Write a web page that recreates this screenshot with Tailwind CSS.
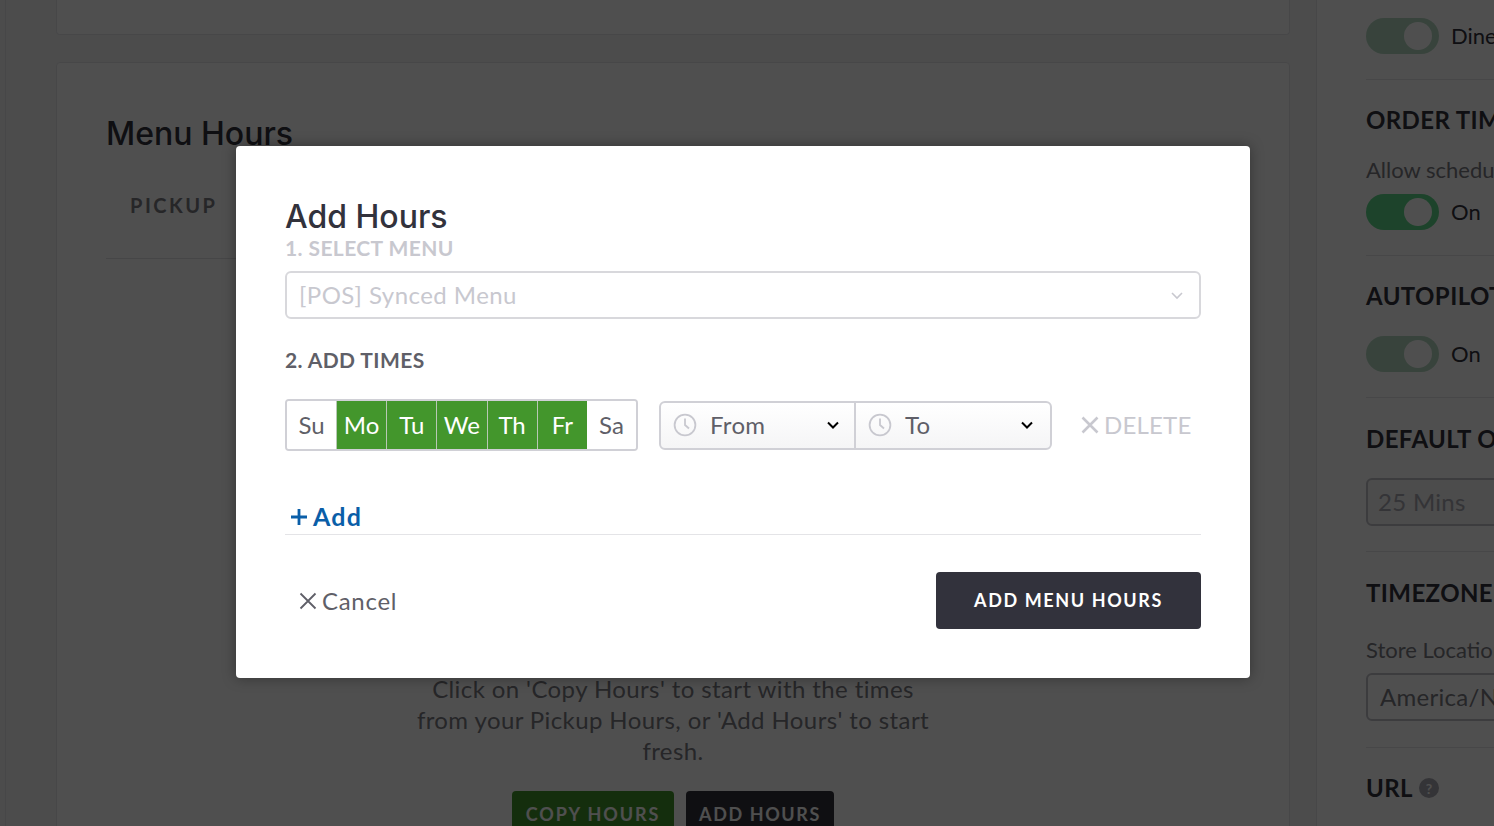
<!DOCTYPE html>
<html lang="en">
<head>
  <meta charset="UTF-8">
  <title>Add Hours</title>
  <script src="https://cdn.jsdelivr.net/npm/@tailwindcss/browser@4"></script>
</head>
<body class="font-['Lato','Liberation_Sans',sans-serif]">
  <div class="relative flex h-[826px] w-[1494px] overflow-hidden bg-[#f5f5f6]">

    <!-- page behind the modal -->
    <main class="ml-[5px] w-[1311px] shrink-0 border-l border-[#e6e6e9] pl-[50px] pr-[26px]">
      <div class="h-[35px] rounded-b border border-t-0 border-[#e6e6e9] bg-white"></div>
      <section class="mt-[27px] h-[900px] rounded border border-[#e6e6e9] bg-white px-[49px] pt-[49px]">
        <h2 class="h-[44px] font-['Inter',sans-serif] text-[32px] leading-[44px] font-medium text-[#32323c]">Menu Hours</h2>
        <div class="mt-[2px] h-[101px] border-b border-[#e0e0e4] pl-[24px] pt-[32px]">
          <span class="text-[20px] font-bold tracking-[2.5px] text-[#7a7a82]">PICKUP</span>
        </div>
        <div class="mt-[414px] flex flex-col items-center">
          <p class="w-[540px] text-center text-[24px] leading-[31px] tracking-[0.4px] text-[#7a7a82]">Click on 'Copy Hours' to start with the times<br>from your Pickup Hours, or 'Add Hours' to start<br>fresh.</p>
          <div class="mt-[25px] flex gap-3">
            <button class="h-[46px] w-[162px] rounded-sm bg-[#43962c] text-[18px] font-bold tracking-[1.900px] text-white">COPY HOURS</button>
            <button class="h-[46px] w-[148px] rounded-sm bg-[#32323c] text-[18px] font-bold tracking-[1.600px] text-white">ADD HOURS</button>
          </div>
        </div>
      </section>
    </main>

    <!-- settings side panel -->
    <aside class="w-[178px] shrink-0 overflow-hidden border-l border-[#e6e6e9] bg-white pl-[49px] whitespace-nowrap text-[#32323c]">
      <div class="flex h-[80px] w-[300px] items-start gap-3 border-b border-[#e6e6e9] pt-[18px]">
        <span class="flex h-[36px] w-[73px] items-center justify-end rounded-full bg-[#b5d8c2] pr-[7px]"><span class="h-[28px] w-[28px] rounded-full bg-white"></span></span>
        <span class="text-[22px] leading-[36px]">Dine In</span>
      </div>
      <div class="h-[176px] w-[300px] border-b border-[#e6e6e9] pt-[24px]">
        <h3 class="text-[24px] leading-[32px] font-bold tracking-[0.4px]">ORDER TIMES</h3>
        <p class="mt-[19px] text-[22px] leading-[30px] text-[#7a7a82]">Allow scheduled orders</p>
        <div class="mt-[9px] flex items-center gap-3">
          <span class="flex h-[36px] w-[73px] items-center justify-end rounded-full bg-[#5fd78a] pr-[7px]"><span class="h-[28px] w-[28px] rounded-full bg-white"></span></span>
          <span class="pb-[2px] text-[22px]">On</span>
        </div>
      </div>
      <div class="h-[142px] w-[300px] border-b border-[#e6e6e9] pt-[24px]">
        <h3 class="text-[24px] leading-[32px] font-bold tracking-[0.4px]">AUTOPILOT</h3>
        <div class="mt-[24px] flex items-center gap-3">
          <span class="flex h-[36px] w-[73px] items-center justify-end rounded-full bg-[#b5d8c2] pr-[7px]"><span class="h-[28px] w-[28px] rounded-full bg-white"></span></span>
          <span class="pb-[2px] text-[22px]">On</span>
        </div>
      </div>
      <div class="h-[154px] w-[300px] border-b border-[#e6e6e9] pt-[25px]">
        <h3 class="text-[24px] leading-[32px] font-bold tracking-[0.4px]">DEFAULT ORDER</h3>
        <div class="mt-[23px] flex h-[48px] items-center rounded-md border-2 border-[#c0c0c8] bg-[#f4f4f5] pl-[10px] text-[24px] tracking-[0.3px] text-[#a8a8b0]">25 Mins</div>
      </div>
      <div class="h-[196px] w-[300px] border-b border-[#e6e6e9] pt-[25px]">
        <h3 class="text-[24px] leading-[32px] font-bold tracking-[0.4px]">TIMEZONE</h3>
        <p class="mt-[26px] text-[22px] leading-[30px] text-[#7a7a82]">Store Location</p>
        <div class="mt-[8px] flex h-[48px] items-center rounded-md border-2 border-[#c0c0c8] pl-[12px] text-[24px] tracking-[0.3px] text-[#7a7a82]">America/New_York</div>
      </div>
      <div class="flex items-center gap-[6px] pt-[24px]">
        <h3 class="text-[24px] leading-[32px] font-bold tracking-[0.4px]">URL</h3>
        <span class="flex h-[20px] w-[20px] items-center justify-center rounded-full bg-[#a8a8b0] text-[14px] font-bold text-white">?</span>
      </div>
    </aside>

    <!-- dim layer + modal -->
    <div class="absolute inset-0 bg-black/[0.69] pl-[236px] pt-[146px]">
      <div class="h-[532px] w-[1014px] rounded bg-white px-[49px] pt-[50px] shadow-[0_0_14px_rgba(0,0,0,0.35)]">
        <h2 class="h-[40px] font-['Inter',sans-serif] text-[32px] leading-[42px] font-medium text-[#32323c]">Add Hours</h2>
        <div class="h-[24px] text-[21px] leading-[24px] font-bold tracking-[0.4px] text-[#c8c8cf]">1. SELECT MENU</div>
        <div class="mt-[11px] flex h-[48px] w-[916px] items-center justify-between rounded-md border-2 border-[#d8d8dc] pl-[12px] pr-[15px] text-[24px] tracking-[0.45px] text-[#c8c8cf]">
          <span>[POS] Synced Menu</span>
          <svg class="h-[14px] w-[14px] text-[#c8c8cf]" viewBox="0 0 14 14" fill="none" stroke="currentColor" stroke-width="1.6"><path d="M2 5l5 5 5-5"/></svg>
        </div>
        <div class="mt-[29px] h-[24px] text-[21px] leading-[24px] font-bold tracking-[0.4px] text-[#5f5f68]">2. ADD TIMES</div>

        <div class="mt-[27px] flex w-[916px] items-center">
          <div class="flex h-[52px] w-[353px] overflow-hidden rounded-sm border-2 border-[#d0d0d6] text-[24px]">
            <span class="flex w-[49px] shrink-0 items-center justify-center bg-white text-[#5f5f68]">Su</span>
            <span class="flex flex-1 items-center justify-center border-l border-[#b8c8b4] bg-[#43962c] text-white">Mo</span>
            <span class="flex flex-1 items-center justify-center border-l border-[#b8c8b4] bg-[#43962c] text-white">Tu</span>
            <span class="flex flex-1 items-center justify-center border-l border-[#b8c8b4] bg-[#43962c] text-white">We</span>
            <span class="flex flex-1 items-center justify-center border-l border-[#b8c8b4] bg-[#43962c] text-white">Th</span>
            <span class="flex flex-1 items-center justify-center border-l border-[#b8c8b4] bg-[#43962c] text-white">Fr</span>
            <span class="flex flex-1 items-center justify-center bg-white text-[#5f5f68]">Sa</span>
          </div>
          <div class="ml-[21px] flex h-[49px] w-[393px] rounded-md border-2 border-[#d0d0d6] bg-gradient-to-b from-white to-[#f5f5f6] text-[24px] tracking-[0.3px] text-[#5f5f68]">
            <div class="flex w-[195px] items-center border-r-2 border-[#d0d0d6] pl-[12px] pr-[15px]">
              <svg class="h-[24px] w-[24px] text-[#c8c8cf]" viewBox="0 0 24 24" fill="none" stroke="currentColor" stroke-width="1.8"><circle cx="12" cy="12" r="10.4"/><path d="M12 5.5V12l4 3.5"/></svg>
              <span class="ml-[13px] flex-1">From</span>
              <svg class="h-[12px] w-[12px] text-black" viewBox="0 0 12 12" fill="none" stroke="currentColor" stroke-width="2"><path d="M1 3.5l5 5 5-5"/></svg>
            </div>
            <div class="flex flex-1 items-center pl-[12px] pr-[17px]">
              <svg class="h-[24px] w-[24px] text-[#c8c8cf]" viewBox="0 0 24 24" fill="none" stroke="currentColor" stroke-width="1.8"><circle cx="12" cy="12" r="10.4"/><path d="M12 5.5V12l4 3.5"/></svg>
              <span class="ml-[13px] flex-1">To</span>
              <svg class="h-[12px] w-[12px] text-black" viewBox="0 0 12 12" fill="none" stroke="currentColor" stroke-width="2"><path d="M1 3.5l5 5 5-5"/></svg>
            </div>
          </div>
          <div class="ml-[29px] flex items-center gap-[5px] text-[24px] tracking-[0.2px] text-[#c8c8cf]">
            <svg class="h-[18px] w-[18px]" viewBox="0 0 18 18" fill="none" stroke="currentColor" stroke-width="2.6"><path d="M1.5 1.5l15 15M16.5 1.500l-15 15"/></svg>
            <span>DELETE</span>
          </div>
        </div>

        <div class="mt-[49px] flex h-[35px] w-[916px] items-center border-b border-[#e4e4e7] pb-[1px] pl-[5px] text-[#0a5ea8]">
          <svg class="h-[18px] w-[18px]" viewBox="0 0 18 18" fill="none" stroke="currentColor" stroke-width="2.800"><path d="M9 1v16M1 9h16"/></svg>
          <span class="ml-[5px] text-[25px] font-bold tracking-[1.2px]">Add</span>
        </div>

        <div class="mt-[37px] flex w-[916px] items-center justify-between">
          <div class="ml-[14px] flex items-center gap-[5px] text-[24px] tracking-[0.7px] text-[#5f5f68]">
            <svg class="h-[18px] w-[18px]" viewBox="0 0 18 18" fill="none" stroke="currentColor" stroke-width="1.800"><path d="M1.500 1.500l15 15M16.500 1.500l-15 15"/></svg>
            <span>Cancel</span>
          </div>
          <button class="h-[57px] w-[265px] rounded-sm bg-[#32323c] text-[18px] font-bold tracking-[1.600px] text-white">ADD MENU HOURS</button>
        </div>
      </div>
    </div>
  </div>
</body>
</html>
